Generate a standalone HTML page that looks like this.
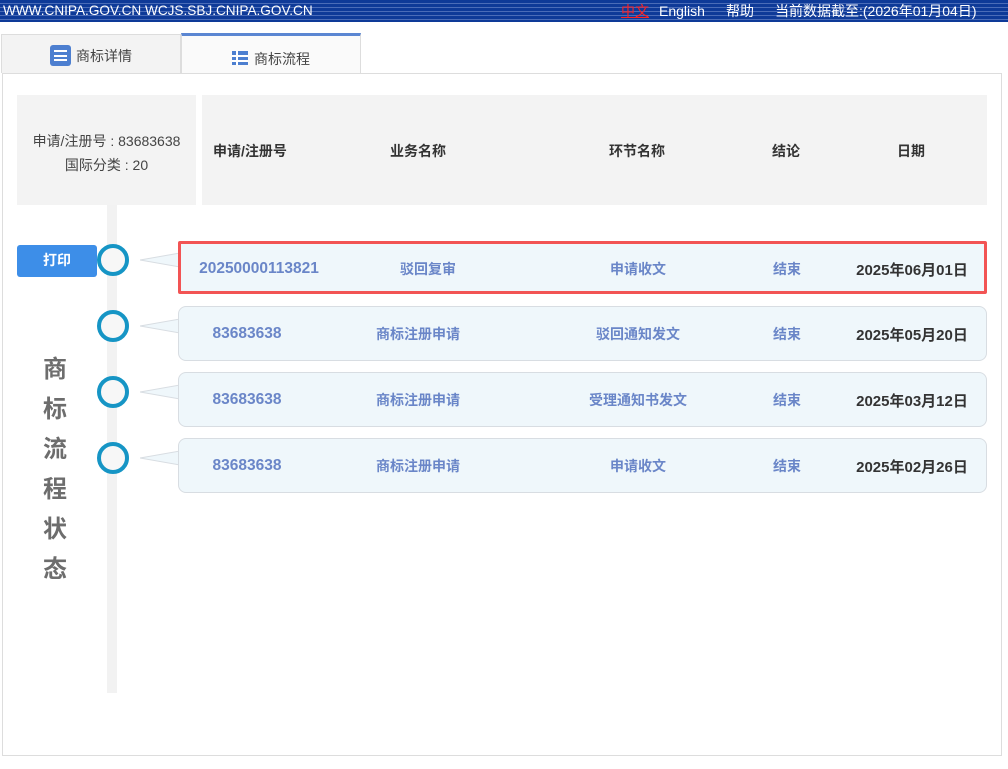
<!DOCTYPE html>
<html><head><meta charset="utf-8"><style>
*{margin:0;padding:0;box-sizing:border-box}
body{width:1008px;height:769px;background:#fff;font-family:"Liberation Sans","Noto Sans CJK SC",sans-serif;position:relative;overflow:hidden}
.hdr{position:absolute;left:0;top:0;width:1008px;height:22px;background:repeating-linear-gradient(#0e3a98 0,#0e3a98 3px,#4a6cb8 3px,#4a6cb8 4px);color:#fff;font-size:14px;line-height:22px}
.abs{position:absolute}
.tab1{left:1px;top:34px;width:180px;height:39px;background:#f3f3f3;border:1px solid #ddd;border-bottom:none}
.tab2{left:181px;top:33px;width:180px;height:40px;background:#fafafa;border:1px solid #ddd;border-top:3px solid #5b86d2;border-bottom:none}
.main{left:2px;top:73px;width:1000px;height:683px;border:1px solid #ddd}
.info{left:17px;top:95px;width:179px;height:110px;background:#f3f3f3;font-size:14px;color:#444;text-align:center;padding-top:34px;line-height:24px}
.th{left:202px;top:95px;width:785px;height:110px;background:#f3f3f3;font-size:14px;font-weight:bold;color:#333}
.th span,.row span{position:absolute;top:0;transform:translateX(-50%);white-space:nowrap}
.bar{left:107px;top:205px;width:10px;height:488px;background:#f2f2f2}
.circ{width:32px;height:32px;border:4px solid #1695c5;border-radius:50%;background:#f7f7f7;left:97px}
.row{left:178px;width:809px;height:55px;background:#eff7fb;border:1px solid #d8dde2;border-radius:8px;font-size:14px;font-weight:bold;color:#6a86c8}
.row span{top:17px}
.row .n{font-size:15.5px;top:18px}
.row .d{color:#333;font-size:15px;top:17px}
.tri{left:140px;width:40px;height:30px}
.vt{left:38px;top:350px;font-size:24px;font-weight:bold;color:#6d6d6d;line-height:40px;width:34px;text-align:center}
</style></head><body>
<div class="hdr"><span class="abs" style="left:3px;font-size:13.6px">WWW.CNIPA.GOV.CN WCJS.SBJ.CNIPA.GOV.CN</span>
<span class="abs" style="left:621px;color:#f22;text-decoration:underline">中文</span>
<span class="abs" style="left:659px">English</span>
<span class="abs" style="left:726px">帮助</span>
<span class="abs" style="left:775px">当前数据截至:(2026年01月04日)</span></div>
<div class="abs tab1"></div>
<div class="abs" style="left:50px;top:45px;width:21px;height:21px;background:#4d7fd0;border-radius:3px"><div style="margin:5px 4px;height:11px;border-top:2px solid #fff;border-bottom:2px solid #fff;position:relative"><div style="position:absolute;top:2.5px;left:0;right:0;height:2px;background:#fff"></div></div></div>
<span class="abs" style="left:76px;top:46px;font-size:14px;color:#444">商标详情</span>
<div class="abs tab2"></div>
<div class="abs" style="left:232px;top:51px;width:16px;height:14px;background:linear-gradient(90deg,#4d7fd0 4px,#fff 4px,#fff 6px,#4d7fd0 6px)"><div style="position:absolute;top:4px;left:0;right:0;height:1.5px;background:#fff"></div><div style="position:absolute;top:9px;left:0;right:0;height:1.5px;background:#fff"></div></div>
<span class="abs" style="left:254px;top:49px;font-size:14px;color:#444">商标流程</span>
<div class="abs main"></div>
<div class="abs info">申请/注册号 : 83683638<br>国际分类 : 20</div>
<div class="abs th">
<span style="left:11px;top:46px;transform:none">申请/注册号</span>
<span style="left:216px;top:46px">业务名称</span>
<span style="left:435px;top:46px">环节名称</span>
<span style="left:584px;top:46px">结论</span>
<span style="left:709px;top:46px">日期</span></div>
<div class="abs bar"></div>
<div class="abs" style="left:17px;top:245px;width:80px;height:32px;background:#3d8ee8;border-radius:3px;color:#fff;font-size:14px;font-weight:bold;text-align:center;line-height:31px">打印</div>
<div class="abs vt">商<br>标<br>流<br>程<br>状<br>态</div>

<svg class="abs tri" style="top:245px"><polygon points="0,15 40,8 40,22" fill="#eff7fb" stroke="#d8dde2"/></svg>
<svg class="abs tri" style="top:311px"><polygon points="0,15 40,8 40,22" fill="#eff7fb" stroke="#d8dde2"/></svg>
<svg class="abs tri" style="top:377px"><polygon points="0,15 40,8 40,22" fill="#eff7fb" stroke="#d8dde2"/></svg>
<svg class="abs tri" style="top:443px"><polygon points="0,15 40,8 40,22" fill="#eff7fb" stroke="#d8dde2"/></svg>

<div class="abs row" style="top:241px;height:53px;border:3px solid #f25454;border-radius:2px"><span class="n" style="left:78px;top:16px">20250000113821</span><span style="left:247px;top:15px">驳回复审</span><span style="left:457px;top:15px">申请收文</span><span style="left:606px;top:15px">结束</span><span class="d" style="left:731px;top:15px">2025年06月01日</span></div>
<div class="abs row" style="top:306px"><span class="n" style="left:68px">83683638</span><span style="left:239px">商标注册申请</span><span style="left:459px">驳回通知发文</span><span style="left:608px">结束</span><span class="d" style="left:733px">2025年05月20日</span></div>
<div class="abs row" style="top:372px"><span class="n" style="left:68px">83683638</span><span style="left:239px">商标注册申请</span><span style="left:459px">受理通知书发文</span><span style="left:608px">结束</span><span class="d" style="left:733px">2025年03月12日</span></div>
<div class="abs row" style="top:438px"><span class="n" style="left:68px">83683638</span><span style="left:239px">商标注册申请</span><span style="left:459px">申请收文</span><span style="left:608px">结束</span><span class="d" style="left:733px">2025年02月26日</span></div>

<div class="abs circ" style="top:244px"></div>
<div class="abs circ" style="top:310px"></div>
<div class="abs circ" style="top:376px"></div>
<div class="abs circ" style="top:442px"></div>
</body></html>
